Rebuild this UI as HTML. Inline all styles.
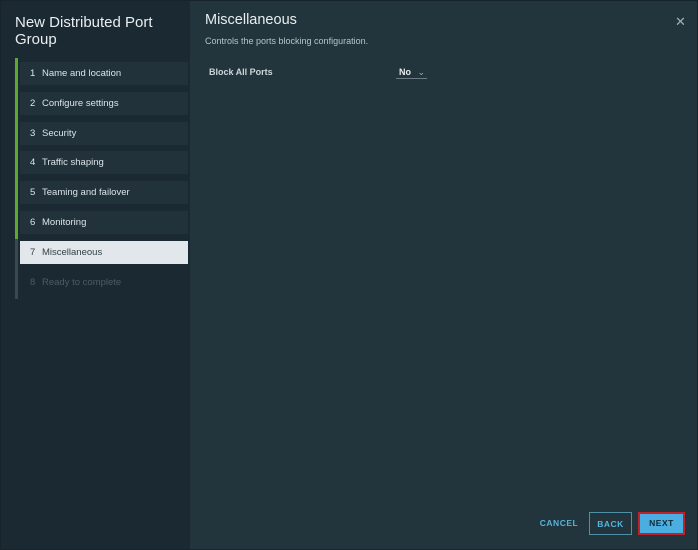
<!DOCTYPE html>
<html><head><style>
body{margin:0;width:698px;height:550px;background:#17242b;font-family:"Liberation Sans",sans-serif;overflow:hidden;position:relative}
.frame{position:absolute;left:1px;top:1px;width:696px;height:548px;background:#22343c}
.side{position:absolute;left:0;top:0;width:189px;height:548px;background:#1b2a32}
.title{position:absolute;left:14px;top:13px;color:#e8eef0;font-size:15px;line-height:17px}
.bar{position:absolute;left:14px;width:3px}
.step{position:absolute;left:19px;width:168px;height:23px;background:#21323b;color:#dce4e7;font-size:9.5px;line-height:23px;padding-left:10px;box-sizing:border-box}
.step b{font-weight:normal;display:inline-block;width:12px}
.step.act{background:#e1e7ea;color:#33414a}
.step.dis{background:none;color:#4c5c64}
.h{position:absolute;left:205px;top:12px;color:#e8eef0;font-size:14.5px}
.sub{position:absolute;left:205px;top:36px;color:#b8c4c9;font-size:9px}
.lbl{position:absolute;left:209px;top:67px;color:#cdd6da;font-size:9px;font-weight:bold}
.sel{position:absolute;left:396px;top:67px;width:31px;height:12px;border-bottom:1px solid #6c7c84;color:#e8eef0;font-size:9px;font-weight:bold;padding-left:3px;box-sizing:border-box}
.x{position:absolute;left:675px;top:14px;color:#9fb0b8;font-size:13px}
.btn{position:absolute;top:512px;height:23px;font-size:8.5px;font-weight:bold;letter-spacing:.5px;line-height:23px;text-align:center;box-sizing:border-box}
</style></head><body>
<div class="frame">
<div class="side">
<div class="title">New Distributed Port<br>Group</div>
<div class="bar" style="top:57px;height:181px;background:#5ea82e"></div>
<div class="bar" style="top:238px;height:60px;background:#3a4950"></div>
<div class="step" style="top:61px"><b>1</b>Name and location</div>
<div class="step" style="top:91px"><b>2</b>Configure settings</div>
<div class="step" style="top:121px"><b>3</b>Security</div>
<div class="step" style="top:150px"><b>4</b>Traffic shaping</div>
<div class="step" style="top:180px"><b>5</b>Teaming and failover</div>
<div class="step" style="top:210px"><b>6</b>Monitoring</div>
<div class="step act" style="top:240px"><b>7</b>Miscellaneous</div>
<div class="step dis" style="top:270px"><b>8</b>Ready to complete</div>
</div>
</div>
<div class="h">Miscellaneous</div>
<div class="sub">Controls the ports blocking configuration.</div>
<div class="lbl">Block All Ports</div>
<div class="sel">No <span style="font-weight:normal;color:#9fb0b8;margin-left:4px">⌄</span></div>
<div class="x">✕</div>
<div class="btn" style="left:537px;width:44px;color:#57b5dc">CANCEL</div>
<div class="btn" style="left:589px;width:43px;border:1px solid #4f8fa8;color:#57b5dc">BACK</div>
<div class="btn" style="left:638px;width:47px;background:#4aaee0;border:2px solid #c0222a;color:#0f2a38;line-height:19px">NEXT</div>
</body></html>
